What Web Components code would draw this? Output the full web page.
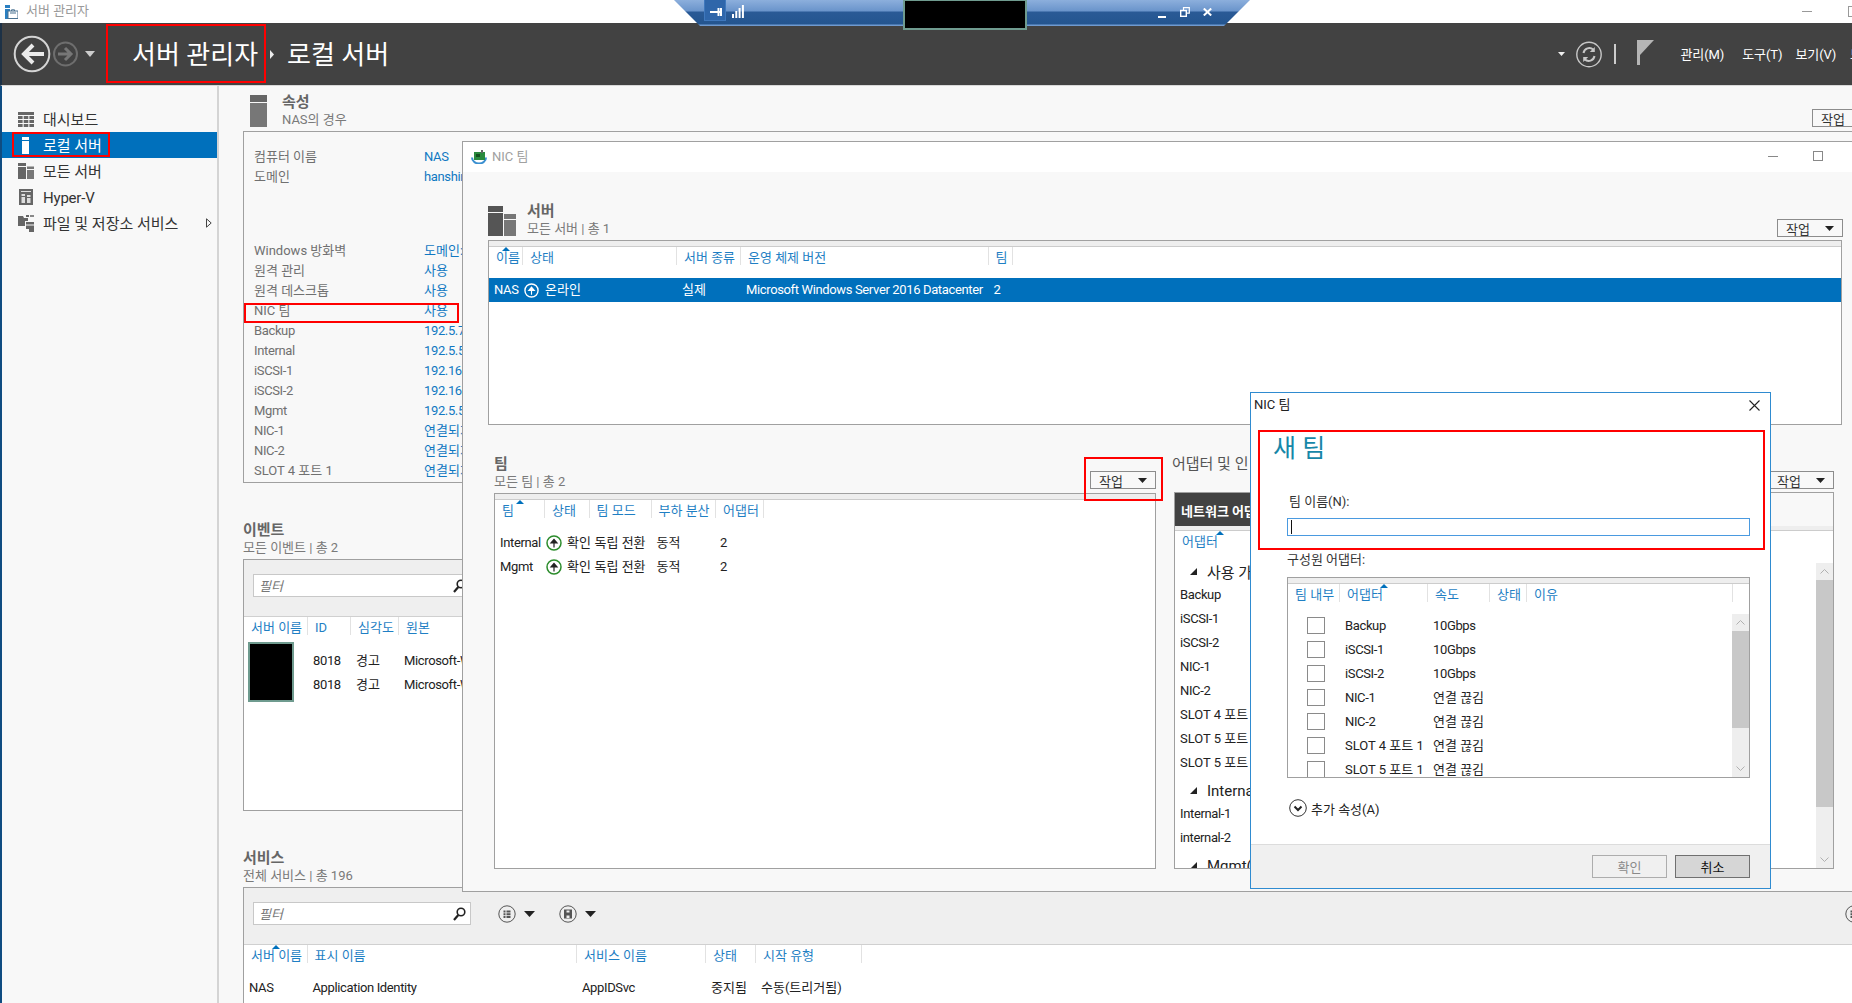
<!DOCTYPE html>
<html lang="ko">
<head>
<meta charset="utf-8">
<title>서버 관리자</title>
<style>
html,body{margin:0;padding:0;background:#f8f8f8}
body{width:1852px;height:1003px;overflow:hidden;font-family:"Roboto","Noto Sans CJK KR",sans-serif;font-size:13px;color:#222}
</style>
</head>
<body>
<sm-shell>
  <sm-titlebar slot="title"></sm-titlebar>
  <sm-header slot="header"></sm-header>
  <sm-sidebar slot="side">
    <sm-navitem icon="grid">대시보드</sm-navitem>
    <sm-navitem icon="server" selected>로컬 서버</sm-navitem>
    <sm-navitem icon="servers">모든 서버</sm-navitem>
    <sm-navitem icon="hyperv" latin>Hyper-V</sm-navitem>
    <sm-navitem icon="files" more>파일 및 저장소 서비스</sm-navitem>
  </sm-sidebar>

  <sm-main slot="main">
    <sm-section heading="속성" sub="NAS의 경우" icon="tower" style="margin-top:7px">
      <sm-action slot="action" width="60" style="margin-bottom:4px">작업</sm-action>
      <sm-props style="height:352px">
        <sm-prop label="컴퓨터 이름" value="NAS"></sm-prop>
        <sm-prop label="도메인" value="hanshin"></sm-prop>
        <sm-prop label="Windows 방화벽" value="도메인: 사용" style="margin-top:54px"></sm-prop>
        <sm-prop label="원격 관리" value="사용"></sm-prop>
        <sm-prop label="원격 데스크톱" value="사용"></sm-prop>
        <sm-prop label="NIC 팀" value="사용"></sm-prop>
        <sm-prop label="Backup" value="192.5.7"></sm-prop>
        <sm-prop label="Internal" value="192.5.5"></sm-prop>
        <sm-prop label="iSCSI-1" value="192.168"></sm-prop>
        <sm-prop label="iSCSI-2" value="192.168"></sm-prop>
        <sm-prop label="Mgmt" value="192.5.5"></sm-prop>
        <sm-prop label="NIC-1" value="연결되지"></sm-prop>
        <sm-prop label="NIC-2" value="연결되지"></sm-prop>
        <sm-prop label="SLOT 4 포트 1" value="연결되지"></sm-prop>
      </sm-props>
    </sm-section>

    <sm-section heading="이벤트" sub="모든 이벤트 | 총 2" style="margin-top:38px">
      <sm-panel style="height:252px">
        <sm-toolbar><sm-filter></sm-filter></sm-toolbar>
        <sm-table plain heads="서버 이름|ID|심각도|원본" cols="64px 43px 48px 200px" gap="10">
          <sm-row><span></span><span>8018</span><span>경고</span><span>Microsoft-W</span></sm-row>
          <sm-row><span></span><span>8018</span><span>경고</span><span>Microsoft-W</span></sm-row>
        </sm-table>
      </sm-panel>
    </sm-section>

    <sm-section heading="서비스" sub="전체 서비스 | 총 196" style="margin-top:38px">
      <sm-panel style="height:200px">
        <sm-toolbar>
          <sm-filter></sm-filter>
          <sm-iconbtn icon="list" caret style="margin-left:27px"></sm-iconbtn>
          <sm-iconbtn icon="save" caret style="margin-left:24px"></sm-iconbtn>
          <sm-iconbtn icon="list" style="margin-left:auto;margin-right:8px"></sm-iconbtn>
        </sm-toolbar>
        <sm-table plain heads="서버 이름|표시 이름|서비스 이름|상태|시작 유형" sort="0" cols="63.5px 269.5px 129px 50px 106px">
          <sm-row><span>NAS</span><span>Application Identity</span><span>AppIDSvc</span><span>중지됨</span><span>수동(트리거됨)</span></sm-row>
        </sm-table>
      </sm-panel>
    </sm-section>
  </sm-main>

  <sm-window slot="over" name="NIC 팀" style="left:462px;top:141px;width:1400px;height:751px">
    <sm-section heading="서버" sub="모든 서버 | 총 1" icon="servers" style="margin:30px 0 0 25px;width:1355px">
      <sm-action slot="action" caret width="66" style="margin-bottom:3px">작업</sm-action>
      <sm-table strip heads="이름|상태|서버 종류|운영 체제 버전|팀" sort="0" cols="34px 154px 64px 247.5px 24px" style="height:185px;margin-right:1px">
        <sm-row selected><span>NAS</span><span style="padding-left:0"><sm-status tone="white" text="온라인"></sm-status></span><span>실제</span><span>Microsoft Windows Server 2016 Datacenter</span><span>2</span></sm-row>
      </sm-table>
    </sm-section>
    <sm-split style="margin-top:30px">
      <sm-section heading="팀" sub="모든 팀 | 총 2">
        <sm-action slot="action" caret width="66">작업</sm-action>
        <sm-table strip heads="팀|상태|팀 모드|부하 분산|어댑터" sort="0" cols="50px 44.5px 62px 64.5px 48px" style="height:376px">
          <sm-row><span>Internal</span><span style="padding-left:1px"><sm-status tone="green" text="확인"></sm-status></span><span>독립 전환</span><span>동적</span><span style="padding-left:4px">2</span></sm-row>
          <sm-row><span>Mgmt</span><span style="padding-left:1px"><sm-status tone="green" text="확인"></sm-status></span><span>독립 전환</span><span>동적</span><span style="padding-left:4px">2</span></sm-row>
        </sm-table>
      </sm-section>
      <sm-section heading="어댑터 및 인" sub=" " shift="-2" plain-title>
        <sm-action slot="action" caret width="66">작업</sm-action>
        <sm-adapters style="height:377px;margin-top:-1px">
          <sm-table plain heads="어댑터" sort="0" cols="90px" gap="6">
            <sm-group style="height:24px">사용 가</sm-group>
            <sm-row><span>Backup</span></sm-row>
            <sm-row><span>iSCSI-1</span></sm-row>
            <sm-row><span>iSCSI-2</span></sm-row>
            <sm-row><span>NIC-1</span></sm-row>
            <sm-row><span>NIC-2</span></sm-row>
            <sm-row><span>SLOT 4 포트</span></sm-row>
            <sm-row><span>SLOT 5 포트</span></sm-row>
            <sm-row><span>SLOT 5 포트</span></sm-row>
            <sm-group style="margin-top:4px">Interna</sm-group>
            <sm-row><span>Internal-1</span></sm-row>
            <sm-row><span>internal-2</span></sm-row>
            <sm-group style="margin-top:4px">Mgmt(</sm-group>
          </sm-table>
          <sm-scrollbar style="top:70px;bottom:0" thumb-top="17" thumb-h="227"></sm-scrollbar>
        </sm-adapters>
      </sm-section>
    </sm-split>
  </sm-window>

  <sm-dialog slot="over" name="NIC 팀" style="left:1250px;top:392px;width:521px;height:497px">
    <sm-table strip heads="팀 내부|어댑터|속도|상태|이유" sort="1" cols="52px 88px 62px 37px 206px" gap="8" style="height:201px">
      <sm-row><span style="padding-left:19px"><sm-check></sm-check></span><span>Backup</span><span>10Gbps</span></sm-row>
      <sm-row><span style="padding-left:19px"><sm-check></sm-check></span><span>iSCSI-1</span><span>10Gbps</span></sm-row>
      <sm-row><span style="padding-left:19px"><sm-check></sm-check></span><span>iSCSI-2</span><span>10Gbps</span></sm-row>
      <sm-row><span style="padding-left:19px"><sm-check></sm-check></span><span>NIC-1</span><span>연결 끊김</span></sm-row>
      <sm-row><span style="padding-left:19px"><sm-check></sm-check></span><span>NIC-2</span><span>연결 끊김</span></sm-row>
      <sm-row><span style="padding-left:19px"><sm-check></sm-check></span><span>SLOT 4 포트 1</span><span>연결 끊김</span></sm-row>
      <sm-row><span style="padding-left:19px"><sm-check></sm-check></span><span>SLOT 5 포트 1</span><span>연결 끊김</span></sm-row>
      <sm-scrollbar style="top:36px;bottom:0" thumb-top="17" thumb-h="97"></sm-scrollbar>
    </sm-table>
  </sm-dialog>

  <sm-redact slot="over" style="left:248px;top:642px;width:46px;height:60px"></sm-redact>
  <sm-rdpbar slot="over"></sm-rdpbar>
  <sm-mark slot="over" style="left:106px;top:24px;width:160px;height:59px"></sm-mark>
  <sm-mark slot="over" style="left:12px;top:132px;width:98px;height:25px"></sm-mark>
  <sm-mark slot="over" style="left:244px;top:303px;width:215px;height:20px"></sm-mark>
  <sm-mark slot="over" style="left:1084px;top:457px;width:79px;height:44px"></sm-mark>
  <sm-mark slot="over" style="left:1258px;top:430px;width:507px;height:120px"></sm-mark>
</sm-shell>

<script>
const LATIN_TRACK='-.36px';
const isLatin=s=>/^[\x00-\x7f]+$/.test(s);
const ICONS = {
  grid:`<svg width="16" height="15" viewBox="0 0 16 15" fill="#666"><rect width="16" height="3"/><rect y="4" width="4.6" height="3"/><rect x="5.7" y="4" width="4.6" height="3"/><rect x="11.4" y="4" width="4.6" height="3"/><rect y="8" width="4.6" height="3"/><rect x="5.7" y="8" width="4.6" height="3"/><rect x="11.4" y="8" width="4.6" height="3"/><rect y="12" width="4.6" height="3"/><rect x="5.7" y="12" width="4.6" height="3"/><rect x="11.4" y="12" width="4.6" height="3"/></svg>`,
  server:`<svg width="16" height="17" viewBox="0 0 16 17" fill="#fff"><rect x="4" width="7" height="3"/><rect x="4" y="4" width="7" height="13"/></svg>`,
  servers:`<svg width="16" height="16" viewBox="0 0 16 16" fill="#666"><rect width="8" height="3"/><rect y="4" width="8" height="12"/><rect x="9" y="3.5" width="7" height="2.5" fill="#777"/><rect x="9" y="7" width="7" height="9" fill="#777"/></svg>`,
  hyperv:`<svg width="16" height="16" viewBox="0 0 16 16"><path d="M1 0h14v16H1z" fill="#666"/><rect x="3" y="2" width="10" height="1" fill="#ddd"/><rect x="3.5" y="5" width="3.5" height="2" fill="#ddd"/><rect x="3.5" y="8" width="3.5" height="6" fill="#ddd"/><rect x="9" y="6" width="3.5" height="2" fill="#ddd"/><rect x="9" y="9" width="3.5" height="5" fill="#ddd"/></svg>`,
  files:`<svg width="16" height="17" viewBox="0 0 16 17" fill="#666"><path d="M0 1h5l1 2h4v3H7v5H0z"/><rect x="8" y="0" width="3" height="2"/><rect x="12" y="0" width="4" height="2" fill="#888"/><rect x="8" y="7" width="8" height="2.5"/><path d="M8 10.500h8V17H11v-3H8z"/></svg>`,
  list:`<svg width="18" height="18" viewBox="0 0 18 18"><circle cx="9" cy="9" r="8.200" fill="none" stroke="#555"/><path d="M5.500 5.500h2v2h-2zM8.500 5.500h4v2h-4zM5.500 8.200h2v2h-2zM8.500 8.200h4v2h-4zM5.500 11h2v2h-2zM8.500 11h4v2h-4z" fill="#555"/></svg>`,
  save:`<svg width="18" height="18" viewBox="0 0 18 18"><circle cx="9" cy="9" r="8.200" fill="none" stroke="#555"/><path d="M5 4.500h8v9H5z" fill="#555"/><rect x="7.500" y="5.500" width="3" height="2" fill="#eee"/><rect x="7.500" y="10.500" width="3" height="2.500" fill="#eee"/></svg>`
};
class Base extends HTMLElement{
  constructor(){super();this.attachShadow({mode:'open'});}
  connectedCallback(){this.shadowRoot.innerHTML=`<style>${this.css()}</style>${this.html()}`;this.ready&&this.ready();}
  css(){return ':host{display:block}';}
  html(){return '<slot></slot>';}
  a(n,d=''){return this.hasAttribute(n)?this.getAttribute(n):d;}
}
const def=(n,c)=>customElements.define(n,c);

def('sm-shell',class extends Base{
  css(){return `:host{display:grid;grid-template-columns:219px 1fr;grid-template-rows:23px 63px 917px;width:1852px;height:1003px;position:relative;overflow:hidden;background:#f8f8f8}
  .t{grid-column:1/3}.h{grid-column:1/3}`;}
  html(){return `<div class="t"><slot name="title"></slot></div><div class="h"><slot name="header"></slot></div><slot name="side"></slot><slot name="main"></slot><slot name="over"></slot>`;}
});

def('sm-titlebar',class extends Base{
  css(){return `:host{display:flex;align-items:center;height:23px;background:#fff;color:#9a9a9a;padding-left:5px}
  span{margin-left:8px;line-height:21px;height:23px}
  .min{margin-left:auto;width:10px;height:1px;background:#999;margin-right:36px}
  .max{width:10px;height:9px;border:1px solid #999;margin-right:-8px;flex:none}`;}
  html(){return `<svg width="13" height="14" viewBox="0 0 13 14"><rect width="5" height="3" fill="#2a7fc1"/><rect y="4" width="5" height="10" fill="#2a7fc1"/><rect x="3" y="6" width="10" height="7.500" fill="#fff" stroke="#49708f"/><path d="M5 8h6M6.500 6V4.800h3V6" stroke="#49708f" fill="none"/></svg><span>서버 관리자</span><div class="min"></div><div class="max"></div>`;}
});

def('sm-header',class extends Base{
  css(){return `:host{display:grid;grid-template-columns:1554px 1fr;height:63px;box-sizing:border-box;background:#424242;border-left:2px solid #1d3146;border-bottom:1px solid #d8d8d8;color:#fff;overflow:hidden}
  .l,.r{display:flex;align-items:center;height:62px}
  .l{padding-left:11px;box-sizing:border-box}
  .crumb{font-size:26px;line-height:32px;white-space:nowrap;flex:none;padding-top:2px}
  .m{font-size:13px;white-space:nowrap;flex:none;padding-bottom:2px;letter-spacing:-.1px}
  svg{flex:none}`;}
  html(){return `<div class="l">
    <svg width="38" height="38" viewBox="0 0 38 38"><circle cx="19" cy="19" r="17.300" fill="none" stroke="#d4d4d4" stroke-width="2"/><path d="M31 19H12M20 10l-9 9 9 9" fill="none" stroke="#eaeaea" stroke-width="4"/></svg>
    <svg width="25" height="26" viewBox="0 0 25 26" style="margin-left:2px"><circle cx="12.500" cy="13" r="11.500" fill="none" stroke="#6e6e6e" stroke-width="2"/><path d="M5 13h13M12 7l6 6-6 6" fill="none" stroke="#777" stroke-width="3"/></svg>
    <svg width="10" height="6" viewBox="0 0 10 6" style="margin-left:7px"><path d="M0 0h10L5 6z" fill="#ccc"/></svg>
    <span class="crumb" style="margin-left:37px;width:138px">서버 관리자</span>
    <svg width="4" height="9" viewBox="0 0 4 9" style="margin-left:0"><path d="M0 0l4 4.500L0 9z" fill="#eee"/></svg>
    <span class="crumb" style="margin-left:13px">로컬 서버</span>
  </div>
  <div class="r">
    <svg width="7" height="4" viewBox="0 0 7 4" style="margin-left:2px"><path d="M0 0h7L3.500 4z" fill="#eee"/></svg>
    <svg width="26" height="27" viewBox="0 0 26 27" style="margin-left:11px"><circle cx="13" cy="13.500" r="12.200" fill="none" stroke="#c8c8c8" stroke-width="1.400"/><path d="M7.500 12a5.800 5.800 0 0 1 9.800-3.200M18.500 15a5.800 5.800 0 0 1-9.800 3.200" fill="none" stroke="#c8c8c8" stroke-width="2"/><path d="M18.800 6v5h-5zM7.200 21v-5h5z" fill="#c8c8c8"/></svg>
    <div style="width:1.500px;height:20px;background:#ccc;margin-left:12px;flex:none"></div>
    <svg width="17" height="25" viewBox="0 0 17 25" style="margin-left:21px;margin-top:-4px"><path d="M0 0h3v25H0z" fill="#b5b5b5"/><path d="M3 0h14L3 15z" fill="#b5b5b5"/></svg>
    <span class="m" style="margin-left:27px">관리(M)</span>
    <span class="m" style="margin-left:18px">도구(T)</span>
    <span class="m" style="margin-left:13px">보기(V)</span>
    <span class="m" style="margin-left:14px">도움말(H)</span>
  </div>`;}
});

def('sm-sidebar',class extends Base{
  css(){return `:host{display:block;box-sizing:border-box;background:#f8f8f8;border-left:2px solid #0f4c81;border-right:2px solid #d4d4d4;padding-top:20px;height:917px}`;}
});
def('sm-navitem',class extends Base{
  css(){return `:host{display:flex;align-items:center;height:26px;padding-left:16px;font-size:15px;color:#333;position:relative;white-space:nowrap}
  :host([selected]){background:#0070bc;color:#fff}
  :host([latin]){letter-spacing:-.2px}
  .i{width:16px;display:flex;justify-content:center;margin-right:9px}
  .x{display:block;margin-top:-2px}
  :host([latin]) .x{margin-top:1px}
  .more{position:absolute;left:204px;top:8px}`;}
  html(){return `<span class="i">${ICONS[this.a('icon')]}</span><span class="x"><slot></slot></span>${this.hasAttribute('more')?'<svg class="more" width="6" height="10" viewBox="0 0 6 10"><path d="M.500.800L5.200 5 .500 9.200z" fill="#f8f8f8" stroke="#444"/></svg>':''}`;}
});

def('sm-main',class extends Base{
  css(){return `:host{display:block;height:917px;overflow:hidden;background:#f8f8f8;padding-left:24px;box-sizing:border-box}
  .w{width:1629px}`;}
  html(){return `<div class="w"><slot></slot></div>`;}
});

def('sm-section',class extends Base{
  css(){return `:host{display:block}
  .head{display:flex;height:38px;position:relative}
  .ic{flex:none}
  .txt{flex:1;min-width:0;white-space:nowrap}
  .t{font-size:15px;font-weight:700;color:#666;line-height:18px}
  :host([plain-title]) .t{font-weight:400;color:#555}
  .s{font-size:13px;color:#7a7a7a;line-height:18px;min-height:18px}
  .act{align-self:flex-end;display:flex}`;}
  html(){
    const icon=this.a('icon');let ic='';
    if(icon==='tower')ic=`<svg class="ic" width="17" height="32" viewBox="0 0 17 32" style="margin:2px 15px 0 7px"><rect width="17" height="7" fill="#666"/><rect y="8" width="17" height="24" fill="#777"/></svg>`;
    if(icon==='servers')ic=`<svg class="ic" width="28" height="30" viewBox="0 0 28 30" style="margin:4px 11px 0 0"><rect width="15" height="6" fill="#555"/><rect y="7" width="15" height="23" fill="#555"/><rect x="16" y="8" width="12" height="5" fill="#777"/><rect x="16" y="14" width="12" height="16" fill="#777"/></svg>`;
    const sh=this.a('shift','0');
    return `<div class="head">${ic}<div class="txt" style="margin-left:${sh}px"><div class="t">${this.a('heading')}</div><div class="s">${this.a('sub')}</div></div><div class="act"><slot name="action"></slot></div></div><slot></slot>`;
  }
});

def('sm-action',class extends Base{
  css(){return `:host{display:flex;align-items:center;box-sizing:border-box;height:18px;border:1px solid #8c8c8c;background:#f8f8f8;color:#333;font-size:13px;padding:0 8px 0 8px;justify-content:space-between;flex:none;margin-bottom:4px}`;}
  html(){return `<span><slot></slot></span>${this.hasAttribute('caret')?'<svg width="9" height="5" viewBox="0 0 9 5"><path d="M0 0h9L4.500 5z" fill="#222"/></svg>':''}`;}
  ready(){this.style.width=this.a('width','66')+'px';}
});

def('sm-props',class extends Base{
  css(){return `:host{display:block;box-sizing:border-box;border:1px solid #a0a0a0;padding:15px 0 0 10px;background:#f8f8f8;overflow:hidden}`;}
});
def('sm-prop',class extends Base{
  css(){return `:host{display:grid;grid-template-columns:170px 1fr;height:20px;line-height:20px;font-size:13px;white-space:nowrap}
  .l{color:#707070}.v{color:#1178c2}`;}
  html(){const l=this.a('label'),v=this.a('value');
    return `<span class="l" style="${isLatin(l)?'letter-spacing:'+LATIN_TRACK:''}">${l}</span><span class="v" style="${isLatin(v)?'letter-spacing:'+LATIN_TRACK:''}">${v}</span>`;}
});

def('sm-panel',class extends Base{
  css(){return `:host{display:block;box-sizing:border-box;border:1px solid #a0a0a0;background:#fff;overflow:hidden}`;}
});
def('sm-toolbar',class extends Base{
  css(){return `:host{display:flex;align-items:flex-start;box-sizing:border-box;height:57px;background:#efefef;border-bottom:1px solid #d0d0d0;padding:14px 0 0 9px}`;}
});
def('sm-filter',class extends Base{
  css(){return `:host{display:flex;align-items:center;justify-content:space-between;box-sizing:border-box;width:218px;height:23px;background:#fff;border:1px solid #c8c8c8;padding:0 4px 0 5px;flex:none}
  i{font-size:13px;color:#777}`;}
  html(){return `<i>필터</i><svg width="13" height="14" viewBox="0 0 13 14"><circle cx="8" cy="5" r="3.800" fill="none" stroke="#222" stroke-width="1.600"/><path d="M5.300 8L1 13" stroke="#222" stroke-width="2.200"/></svg>`;}
});
def('sm-iconbtn',class extends Base{
  css(){return `:host{display:flex;align-items:center;height:23px;flex:none}
  svg+svg{margin-left:8px}`;}
  html(){return `${ICONS[this.a('icon')]}${this.hasAttribute('caret')?'<svg width="11" height="6" viewBox="0 0 11 6"><path d="M0 0h11L5.500 6z" fill="#222"/></svg>':''}`;}
});

def('sm-table',class extends Base{
  css(){return `:host{display:block;box-sizing:border-box;position:relative;background:#fff;border:1px solid #a0a0a0;overflow:hidden;font-size:13px;color:#222}
  :host([plain]){border:0;background:#fff}
  .strip{height:5px;background:#eee;border-bottom:1px solid #ccc}
  .head{display:grid;grid-template-columns:var(--cols);height:22px}
  .head div{position:relative;box-sizing:border-box;padding-left:7px;line-height:22px;color:#1f7fc4;white-space:nowrap}
  .head div::after{content:"";position:absolute;right:0;top:0;height:18px;width:1px;background:#e2e2e2}
  .head b{position:absolute;left:50%;top:0;margin-left:-4px;border:4px solid transparent;border-top:0;border-bottom:4px solid #0070bc}
  .body{padding-top:var(--gap,9px)}`;}
  html(){
    const s=this.a('sort');
    const hs=this.a('heads').split('|').map((h,i)=>`<div>${h}${String(i)===s?'<b></b>':''}</div>`).join('');
    return `${this.hasAttribute('strip')?'<div class="strip"></div>':''}<div class="head">${hs}</div><div class="body"><slot></slot></div>`;
  }
  ready(){this.style.setProperty('--cols',this.a('cols'));if(this.a('gap'))this.style.setProperty('--gap',this.a('gap')+'px');}
});
def('sm-row',class extends Base{
  css(){return `:host{display:grid;grid-template-columns:var(--cols);height:24px;line-height:24px;align-items:center}
  :host([selected]){background:#0070bc;color:#fff}
  ::slotted(*){padding-left:5px;white-space:nowrap;display:flex;align-items:center;height:24px}`;}
  ready(){for(const c of this.children){const t=c.textContent.trim();if(t&&isLatin(t))c.style.letterSpacing=LATIN_TRACK;}}
});
def('sm-group',class extends Base{
  css(){return `:host{display:flex;align-items:center;height:23px;font-size:15px;padding-left:15px;color:#222;white-space:nowrap}
  svg{margin-right:10px;flex:none}`;}
  html(){return `<svg width="7" height="7" viewBox="0 0 7 7"><path d="M7 0v7H0z" fill="#222"/></svg><slot></slot>`;}
});
def('sm-status',class extends Base{
  css(){return `:host{display:inline-flex;align-items:center;white-space:nowrap}
  svg{flex:none}`;}
  html(){const w=this.a('tone')==='white';const c=w?'#fff':'#2c8c2c';const d=w?15:16;
    return `<svg width="${d}" height="${d}" viewBox="0 0 16 16" style="margin-left:${w?1:0}px;margin-right:${w?6:5}px"><circle cx="8" cy="8" r="7" fill="${w?'none':'#fff'}" stroke="${c}" stroke-width="1.500"/><path d="M8 12.500V6M5 8l3-3.500L11 8z" stroke="${w?'#fff':'#222'}" fill="${w?'#fff':'#222'}" stroke-width="1.200"/></svg>${this.a('text')}`;}
});
def('sm-check',class extends Base{
  css(){return `:host{display:block;box-sizing:border-box;width:18px;height:17px;border:1px solid #8a8a8a;background:#fff;flex:none;margin-top:-1px}`;}
  html(){return '';}
});
def('sm-scrollbar',class extends Base{
  css(){return `:host{position:absolute;right:0;width:17px;background:#eee;display:block}
  .t{position:absolute;left:0;right:0;background:#c8c8c8}
  svg{position:absolute;left:4px}`;}
  html(){return `<svg style="top:6px" width="9" height="5" viewBox="0 0 9 5"><path d="M.500 4.500l4-4 4 4" fill="none" stroke="#b0b0b0"/></svg><div class="t" style="top:${this.a('thumb-top')}px;height:${this.a('thumb-h')}px"></div><svg style="bottom:6px" width="9" height="5" viewBox="0 0 9 5"><path d="M.500.500l4 4 4-4" fill="none" stroke="#b0b0b0"/></svg>`;}
});

def('sm-split',class extends Base{
  css(){return `:host{display:grid;grid-template-columns:662px 660px;column-gap:18px;padding-left:31px}`;}
});
def('sm-adapters',class extends Base{
  css(){return `:host{display:block;box-sizing:border-box;position:relative;border:1px solid #a0a0a0;background:#fff;overflow:hidden}
  .top{height:33px;background:#f8f8f8}
  .tab{width:220px;height:33px;background:#424242;color:#fff;font-weight:700;font-size:13px;line-height:37px;padding-left:6px;box-sizing:border-box;white-space:nowrap}
  .strip{height:4px;background:#eee;border-bottom:1px solid #ccc}`;}
  html(){return `<div class="top"><div class="tab">네트워크 어댑터</div></div><div class="strip"></div><slot></slot>`;}
});

def('sm-window',class extends Base{
  css(){return `:host{position:absolute;box-sizing:border-box;border:1px solid #a0a0a0;background:#f8f8f8;display:block;overflow:hidden}
  .bar{display:flex;align-items:center;height:30px;background:#fff;color:#a0a0a0;font-size:13px;padding-left:8px}
  .bar span{margin-left:5px;padding-bottom:3px}
  .min{position:absolute;left:1305px;top:14px;width:10px;height:1px;background:#888}
  .max{position:absolute;left:1350px;top:9px;width:10px;height:10px;border:1px solid #888;box-sizing:border-box}`;}
  html(){return `<div class="bar"><svg width="16" height="14" viewBox="0 0 16 14"><path d="M1 7.500a7 6 0 0 0 14 0" fill="none" stroke="#3a8fd0" stroke-width="2"/><rect x="3" y="2" width="11" height="8" fill="#2a8a3e"/><rect x="5" y="4" width="4" height="3" fill="#14501f"/><rect x="10" y="0" width="2" height="3" fill="#666"/></svg><span>${this.a('name')}</span></div><div class="min"></div><div class="max"></div><slot></slot>`;}
});

def('sm-dialog',class extends Base{
  css(){return `:host{position:absolute;box-sizing:border-box;border:1px solid #2f8bd0;background:#fff;display:flex;flex-direction:column;color:#222;font-size:13px}
  .bar{display:flex;align-items:center;justify-content:space-between;height:24px;padding:0 10px 0 3px;flex:none}
  .bar span{padding-bottom:3px}
  h2{margin:17px 0 0 22px;font-size:25px;font-weight:400;line-height:30px;color:#1787a8}
  .in{margin:0 20px 0 36px;display:flex;flex-direction:column}
  label{display:block;line-height:18px;color:#333}
  .input{height:18px;box-sizing:border-box;border:1px solid #4a9ae0;margin-top:7px;display:flex;align-items:center;padding-left:3px}
  .caret{width:1px;height:14px;background:#111}
  .extra{display:flex;align-items:center;margin-top:20px;height:20px;padding-left:2px}
  .extra svg{margin-right:4px}
  .foot{margin-top:auto;height:44px;box-sizing:border-box;background:#f0f0f0;border-top:1px solid #dcdcdc;display:flex;justify-content:flex-end;padding:10px 20px 0 0;column-gap:8px}
  .btn{width:75px;height:23px;box-sizing:border-box;display:flex;align-items:center;justify-content:center}
  .off{border:1px solid #adadad;color:#8a8a8a}
  .on{border:1px solid #707070;background:#d6d6d6;color:#111}`;}
  html(){return `<div class="bar"><span>${this.a('name')}</span><svg width="11" height="11" viewBox="0 0 11 11"><path d="M.500.500l10 10M10.500.500l-10 10" stroke="#222" stroke-width="1.100"/></svg></div>
  <h2>새 팀</h2>
  <div class="in">
    <label style="margin-top:29px;padding-left:2px">팀 이름(N):</label>
    <div class="input"><div class="caret"></div></div>
    <label style="margin-top:15px">구성원 어댑터:</label>
    <div style="margin-top:8px"><slot></slot></div>
    <div class="extra"><svg width="18" height="18" viewBox="0 0 18 18"><circle cx="9" cy="9" r="8.300" fill="none" stroke="#333"/><path d="M5.500 7.500L9 11l3.500-3.500" fill="none" stroke="#222" stroke-width="2"/></svg><span>추가 속성(A)</span></div>
  </div>
  <div class="foot"><div class="btn off">확인</div><div class="btn on">취소</div></div>`;}
});

def('sm-mark',class extends Base{
  css(){return `:host{position:absolute;display:block;box-sizing:border-box;border:2px solid #f00;pointer-events:none}`;}
  html(){return '';}
});
def('sm-redact',class extends Base{
  css(){return `:host{position:absolute;display:block;box-sizing:border-box;background:#000;border:2px solid #6f9b8f}`;}
  html(){return '';}
});
def('sm-rdpbar',class extends Base{
  css(){return `:host{position:absolute;left:674px;top:0;width:576px;height:30px;display:block}
  .bar{position:absolute;inset:0 0 4px 0;clip-path:polygon(0 0,100% 0,550px 100%,26px 100%);background:linear-gradient(#8cafdc 0,#6a94cb 11px,#2a5a96 12px,#24558f 24px,#6f9ad0 25px,#6f9ad0 26px)}
  .pin{position:absolute;left:30px;top:0;width:22px;height:21px;border:1px solid #3f78bd;border-top:0;box-sizing:border-box;background:#2f66aa}
  .ico{position:absolute}
  .blk{position:absolute;left:229px;top:0;width:124px;height:30px;box-sizing:border-box;background:#000;border:2px solid #6f9b8f;border-top-width:1px}`;}
  html(){return `<div class="bar"></div><div class="pin"></div>
  <svg class="ico" style="left:36px;top:7px" width="12" height="10" viewBox="0 0 12 10"><path d="M0 5h8M8.500 1v8M11 1v8M8.500 5H11" stroke="#fff" stroke-width="2"/></svg>
  <svg class="ico" style="left:58px;top:5px" width="12" height="13" viewBox="0 0 12 13"><path d="M0 9h2v4H0zM3.300 6h2v7h-2zM6.600 3h2v10h-2zM9.900 0h2v13h-2z" fill="#fff"/></svg>
  <div class="blk"></div>
  <svg class="ico" style="left:484px;top:15px" width="8" height="4" viewBox="0 0 8 4"><rect y="1" width="8" height="2" fill="#fff"/></svg>
  <svg class="ico" style="left:506px;top:7px" width="10" height="10" viewBox="0 0 10 10"><path d="M3.500 3V.700h5.800v5.500H7" fill="none" stroke="#fff" stroke-width="1.200"/><rect x=".7" y="3.500" width="5.600" height="5.800" fill="none" stroke="#fff" stroke-width="1.400"/></svg>
  <svg class="ico" style="left:529px;top:8px" width="9" height="8" viewBox="0 0 9 8"><path d="M.800.500l7.400 7M8.200.500l-7.400 7" stroke="#fff" stroke-width="2"/></svg>`;}
});
</script>
</body>
</html>
